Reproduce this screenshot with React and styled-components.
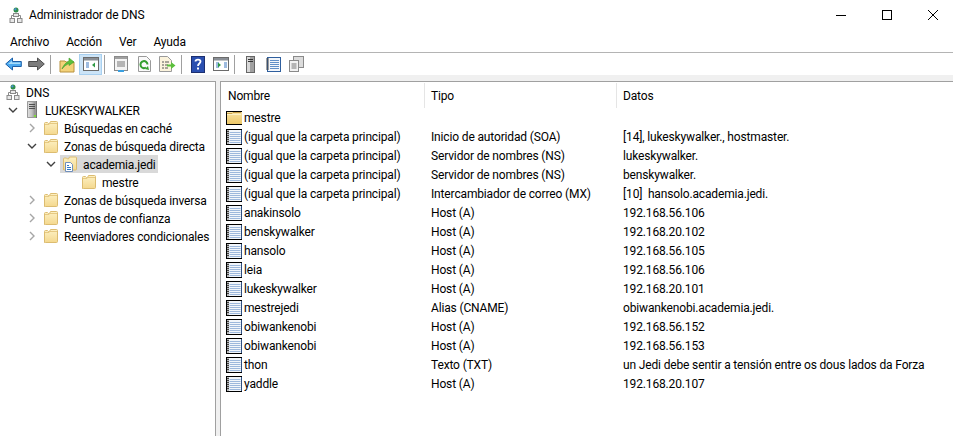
import React from "react";
import styled, { createGlobalStyle } from "styled-components";

const Global = createGlobalStyle`
  html, body { margin: 0; padding: 0; background: #fff; overflow: hidden; }
  body { font-family: Roboto, "Open Sans", sans-serif; font-size: 12px; letter-spacing: -0.15px; color: #000; }
`;

const Window = styled.div`
  width: 953px; height: 436px; display: flex; flex-direction: column; overflow: hidden;
`;
const TitleBar = styled.div`
  height: 30px; display: flex; align-items: center; padding-left: 8px; gap: 5px; flex: none;
`;
const TitleText = styled.span` font-size: 12px; flex: 1; `;
const WinButtons = styled.div` display: flex; margin-right: -3px; `;
const WinButton = styled.div`
  width: 46px; height: 30px; display: flex; align-items: center; justify-content: center;
`;
const MenuBar = styled.div`
  height: 22px; display: flex; align-items: center; padding: 1px 0 0 10px; gap: 17px; flex: none;
  border-bottom: 1px solid #b4b4b4; box-sizing: content-box;
  height: 21px;
`;
const MenuItem = styled.span` font-size: 12px; `;
const ToolBar = styled.div`
  height: 22px; display: flex; align-items: center; padding-left: 2px; background: #fff; flex: none;
`;
const ToolBtn = styled.div`
  width: 23px; height: 21px; display: flex; align-items: center; justify-content: center; flex: none;
  box-sizing: border-box;
  margin-left: ${p => p.$ml || 0}px;
  ${p => p.$on ? "background:#cce4f7;border:1px solid #a8d0f0;" : ""}
`;
const Sep = styled.div`
  width: 1px; height: 19px; background: #a0a0a0; flex: none;
  margin: 0 2px;
`;
const Band = styled.div` height: 6px; background: #f0f0f0; flex: none; `;
const Panes = styled.div`
  flex: 1; display: flex; background: #f0f0f0; min-height: 0;
`;
const TreePane = styled.div`
  width: 216px; flex: none; background: #fff; border: 1px solid #a0a0a0; border-left: 0; border-bottom: 0;
  padding-top: 1px; box-sizing: border-box;
`;
const TreeRow = styled.div`
  height: 18px; display: flex; align-items: center; white-space: nowrap;
  padding-left: ${p => 5 + 19 * Math.max(0, p.$level - 1)}px;
`;
const Chevron = styled.div`
  width: 19px; height: 18px; display: flex; align-items: center; flex: none; padding-left: 3px; box-sizing: border-box;
`;
const TreeLabel = styled.div`
  display: flex; align-items: center; gap: 5px; height: 18px;
  ${p => p.$sel ? "background:#d9d9d9;margin-left:-2px;padding:0 2px;" : ""}
`;
const TreeText = styled.span` padding-top: 2px; `;
const ListPane = styled.div`
  flex: 1; background: #fff; border: 1px solid #a0a0a0; border-right: 0; border-bottom: 0; margin-left: 4px;
  box-sizing: border-box; min-width: 0;
`;
const HeaderRow = styled.div`
  display: grid; grid-template-columns: 204px 192px 1fr; height: 26px; align-items: stretch;
`;
const HeaderCell = styled.div`
  padding: 1px 0 0 ${p => p.$first ? 7 : 6}px; display: flex; align-items: center; margin-top: 1px; box-sizing: border-box;
  ${p => p.$last ? "" : "border-right:1px solid #e5e5e5;"}
`;
const Row = styled.div`
  display: grid; grid-template-columns: 204px 192px 1fr; height: 19px; align-items: center; white-space: pre;
`;
const NameCell = styled.div` display: flex; align-items: center; gap: 2px; padding-left: 5px; `;
const Cell = styled.div` padding-left: 6px; `;

const Ico = styled.svg` display: block; flex: none; `;

const Gradients = () => (
  <Ico width="0" height="0" style={{ position: "absolute" }}>
    <defs>
      <linearGradient id="fld" x1="0" x2="0" y1="0" y2="1">
        <stop offset="0" stopColor="#fdf1c4" />
        <stop offset="1" stopColor="#f4d88e" />
      </linearGradient>
      <linearGradient id="fldE" x1="0" x2="0" y1="0" y2="1">
        <stop offset="0" stopColor="#fae6a8" />
        <stop offset="1" stopColor="#ecc563" />
      </linearGradient>
      <linearGradient id="srv" x1="0" x2="1" y1="0" y2="0">
        <stop offset="0" stopColor="#e4e4e4" />
        <stop offset=".5" stopColor="#c0c0c0" />
        <stop offset="1" stopColor="#6e6e6e" />
      </linearGradient>
    </defs>
  </Ico>
);

const FolderIcon = ({ edge }) =>
  edge ? (
    <Ico width="16" height="16" viewBox="0 0 16 16">
      <rect x="0" y="1" width="16" height="14" fill="url(#fldE)" />
      <path d="M0 1.500h16M0 14.500h16" stroke="#000" />
      <path d="M.5 1v14" stroke="#000" />
      <path d="M1 3.500h5l1-1h8" fill="none" stroke="#c9a24a" />
      <path d="M1 4.500h14" stroke="#fdf1c4" />
    </Ico>
  ) : (
    <Ico width="16" height="16" viewBox="0 0 16 16">
      <path d="M1.500 14.500v-11q0-1 1-1h2l1 1h1l1-2h6q1 0 1 1v11q0 1-1 1h-11q-1 0-1-1z" fill="url(#fld)" stroke="#dcbc70" />
      <path d="M2 4.500h4l1-1h7" fill="none" stroke="#e6c982" />
    </Ico>
  );

const ZoneIcon = () => (
  <Ico width="16" height="16" viewBox="0 0 16 16">
    <path d="M1.500 14v-11q0-1 1-1h2l1 1h1l1-2h6q1 0 1 1v11q0 1-1 1h-11q-1 0-1-1z" fill="url(#fld)" stroke="#dcbc70" />
    <path d="M3.500 6.500h5l2 2v7h-7z" fill="#fff" stroke="#6f8fbc" />
    <path d="M5 9.500h2M5 11.500h4M5 13.500h4" stroke="#2f78c8" />
  </Ico>
);

const RecordIcon = () => (
  <Ico width="16" height="16" viewBox="0 0 16 16">
    <rect x="0" y="0" width="16" height="16" fill="#f2f6fb" />
    <rect x="0" y="0" width="3" height="16" fill="#b8b8b8" />
    <path d="M0 2.500h3M0 4.500h3M0 6.500h3M0 8.500h3M0 10.500h3M0 12.500h3" stroke="#404040" />
    <path d="M3.500 3.500h11M3.500 5.500h11M3.500 7.500h11M3.500 9.500h11M3.500 11.500h11M3.500 13.500h11" stroke="#9db8dc" />
    <path d="M0 .5h16M0 15.500h16M.5 0v16" stroke="#000" />
    <path d="M15.500 1v14" stroke="#2e4f80" />
  </Ico>
);

const ServerIcon = () => (
  <Ico width="16" height="20" viewBox="0 0 16 20">
    <rect x="3" y="1" width="10" height="17" fill="url(#srv)" />
    <path d="M3.500 1.500h8v16h-8z" fill="none" stroke="#9a9a9a" />
    <path d="M5 4.500h6M5 6.500h6M5 8.500h6" stroke="#505050" />
    <rect x="10" y="15" width="2" height="2" fill="#7fdc3a" />
  </Ico>
);

const DnsIcon = () => (
  <Ico width="16" height="17" viewBox="0 0 16 17">
    <circle cx="8" cy="3" r="2.500" fill="#2f8f4a" />
    <circle cx="7.400" cy="2.300" r="1.100" fill="#4c8fe0" />
    <path d="M8 5.500v3M3.500 11V8.500h9V11" fill="none" stroke="#8a8a8a" />
    <rect x="5.500" y="6.500" width="5" height="3" fill="#e8e8e8" stroke="#8a8a8a" />
    <rect x="2" y="11.500" width="4.500" height="4" fill="#e8e8e8" stroke="#8a8a8a" />
    <rect x="9.500" y="11.500" width="4.500" height="4" fill="#e8e8e8" stroke="#8a8a8a" />
  </Ico>
);

const ChevronDown = () => (
  <Ico width="10" height="6" viewBox="0 0 10 6">
    <path d="M1 1l4 4 4-4" fill="none" stroke="#404040" strokeWidth="1.400" />
  </Ico>
);
const ChevronRight = () => (
  <Ico width="10" height="10" viewBox="0 0 10 10">
    <path d="M3 1l4 4-4 4" fill="none" stroke="#a6a6a6" strokeWidth="1.400" />
  </Ico>
);

const BackIcon = () => (
  <Ico width="17" height="14" viewBox="0 0 17 14">
    <path d="M.7 7L7.500 1v3.500h8.800v5H7.500V13z" fill="#4aa8ee" stroke="#1c5fa8" />
    <path d="M3 7l4-3.200v1.600h8.300v1.600z" fill="#a8dcfa" />
  </Ico>
);
const ForwardIcon = () => (
  <Ico width="17" height="14" viewBox="0 0 17 14">
    <path d="M16.300 7L9.500 1v3.500H.7v5h8.800V13z" fill="#7d7d7d" stroke="#4e4e4e" />
  </Ico>
);
const UpIcon = () => (
  <Ico width="16" height="18" viewBox="0 0 16 18">
    <path d="M1 6h5l1 1h8v10H1z" fill="#f3d27a" stroke="#b8923f" />
    <path d="M3 14C5 9 8 7 10 6V3l5 4-5 3.500V8.500C8 9.500 5 11 3 14z" fill="#5cc03c" stroke="#3c9a2a" strokeWidth=".6" />
  </Ico>
);
const PaneGlyph = ({ arrow }) => (
  <Ico width="16" height="14" viewBox="0 0 16 14">
    <rect x=".5" y=".5" width="15" height="13" fill="#fff" stroke="#6b6b6b" />
    <rect x="1" y="1" width="14" height="2.500" fill="#8a8f96" />
    <path d="M3 6h3M3 8h3M3 10h3" stroke="#3f78c0" />
    <path d={arrow === "left" ? "M12 5.500v5l-3-2.500z" : "M5 5.500v5l3-2.500z"} fill="#2f9a45" />
    {arrow !== "left" ? <path d="M11 6h3M11 8h3M11 10h3" stroke="#3f78c0" /> : null}
  </Ico>
);
const PropsIcon = () => (
  <Ico width="16" height="16" viewBox="0 0 16 16">
    <rect x="1.500" y=".5" width="13" height="14" fill="#f4f4f4" stroke="#8a8a8a" />
    <rect x="2" y="1" width="12" height="2" fill="#a0a0a0" />
    <path d="M4 6h8M4 8h8M4 10h8" stroke="#777" />
    <rect x="5" y="14" width="6" height="2" fill="#3aa0e0" />
  </Ico>
);
const RefreshIcon = () => (
  <Ico width="13" height="16" viewBox="0 0 13 16">
    <path d="M.5.5h8l4 4v11H.5z" fill="#fafafa" stroke="#9a9a9a" />
    <path d="M9.500 8.500A3.500 3.500 0 1 0 8 11.500" fill="none" stroke="#35a02f" strokeWidth="2" />
    <path d="M7 13l3-3 1 4z" fill="#35a02f" />
  </Ico>
);
const ExportIcon = () => (
  <Ico width="17" height="16" viewBox="0 0 17 16">
    <path d="M.5.5h8l4 4v11H.5z" fill="#fbf3dc" stroke="#9a9a9a" />
    <path d="M3 6h2M6 6h4M3 9h2M6 9h3M3 12h2M6 12h3" stroke="#555" />
    <path d="M8 8.500h4V6l4.500 3.500L12 13v-2.500H8z" fill="#5cc03c" />
  </Ico>
);
const HelpIcon = () => (
  <Ico width="14" height="17" viewBox="0 0 14 17">
    <rect x=".5" y=".5" width="13" height="16" fill="#2a4fb0" stroke="#1c2f70" />
    <path d="M4.500 5.500C4.500 3 9.500 3 9.500 5.500 9.500 7.500 7 7.500 7 10" fill="none" stroke="#fff" strokeWidth="1.800" />
    <rect x="6" y="11.500" width="2" height="2" fill="#fff" />
  </Ico>
);
const TowerIcon = () => (
  <Ico width="9" height="17" viewBox="0 0 9 17">
    <rect x=".5" y=".5" width="8" height="16" fill="#a0a0a0" stroke="#666" />
    <rect x="1" y="1" width="3" height="15" fill="#d8d8d8" />
    <path d="M2 3.500h5M2 5.500h5" stroke="#333" />
  </Ico>
);
const NotesIcon = () => (
  <Ico width="15" height="15" viewBox="0 0 15 15">
    <rect x="1.500" y=".5" width="13" height="14" fill="#f2f6fb" stroke="#2f5f9e" />
    <path d="M0 2h3M0 4h3M0 6h3M0 8h3M0 10h3M0 12h3" stroke="#444" />
    <path d="M4 3.500h9M4 5.500h9M4 7.500h9M4 9.500h9M4 11.500h9" stroke="#5f8fc8" />
  </Ico>
);
const CopyIcon = () => (
  <Ico width="15" height="16" viewBox="0 0 15 16">
    <rect x="4.500" y=".5" width="10" height="11" fill="#dcdcdc" stroke="#8a8a8a" />
    <rect x=".5" y="4.500" width="9" height="11" fill="#f2f2f2" stroke="#8a8a8a" />
    <path d="M2.500 8h5M2.500 10h5M2.500 12h5" stroke="#777" />
  </Ico>
);

const Tree = [
  { level: 0, icon: <DnsIcon />, text: "DNS" },
  { level: 1, chev: "down", icon: <ServerIcon />, text: "LUKESKYWALKER" },
  { level: 2, chev: "right", icon: <FolderIcon />, text: "Búsquedas en caché" },
  { level: 2, chev: "down", icon: <FolderIcon />, text: "Zonas de búsqueda directa" },
  { level: 3, chev: "down", icon: <ZoneIcon />, text: "academia.jedi", sel: true },
  { level: 4, chev: "none", icon: <FolderIcon />, text: "mestre" },
  { level: 2, chev: "right", icon: <FolderIcon />, text: "Zonas de búsqueda inversa" },
  { level: 2, chev: "right", icon: <FolderIcon />, text: "Puntos de confianza" },
  { level: 2, chev: "right", icon: <FolderIcon />, text: "Reenviadores condicionales" },
];

const same = "(igual que la carpeta principal)";
const Records = [
  ["mestre", "", "", true],
  [same, "Inicio de autoridad (SOA)", "[14], lukeskywalker., hostmaster."],
  [same, "Servidor de nombres (NS)", "lukeskywalker."],
  [same, "Servidor de nombres (NS)", "benskywalker."],
  [same, "Intercambiador de correo (MX)", "[10]  hansolo.academia.jedi."],
  ["anakinsolo", "Host (A)", "192.168.56.106"],
  ["benskywalker", "Host (A)", "192.168.20.102"],
  ["hansolo", "Host (A)", "192.168.56.105"],
  ["leia", "Host (A)", "192.168.56.106"],
  ["lukeskywalker", "Host (A)", "192.168.20.101"],
  ["mestrejedi", "Alias (CNAME)", "obiwankenobi.academia.jedi."],
  ["obiwankenobi", "Host (A)", "192.168.56.152"],
  ["obiwankenobi", "Host (A)", "192.168.56.153"],
  ["thon", "Texto (TXT)", "un Jedi debe sentir a tensión entre os dous lados da Forza"],
  ["yaddle", "Host (A)", "192.168.20.107"],
];

export default function App() {
  return (
    <Window>
      <Global />
      <Gradients />
      <TitleBar>
        <DnsIcon />
        <TitleText>Administrador de DNS</TitleText>
        <WinButtons>
          <WinButton>
            <Ico width="10" height="10" viewBox="0 0 10 10"><path d="M0 5.500h10" stroke="#000" /></Ico>
          </WinButton>
          <WinButton>
            <Ico width="10" height="10" viewBox="0 0 10 10"><rect x=".5" y=".5" width="9" height="9" fill="none" stroke="#000" /></Ico>
          </WinButton>
          <WinButton>
            <Ico width="10" height="10" viewBox="0 0 10 10"><path d="M0 0l10 10M10 0L0 10" stroke="#000" /></Ico>
          </WinButton>
        </WinButtons>
      </TitleBar>
      <MenuBar>
        <MenuItem>Archivo</MenuItem>
        <MenuItem>Acción</MenuItem>
        <MenuItem>Ver</MenuItem>
        <MenuItem>Ayuda</MenuItem>
      </MenuBar>
      <ToolBar>
        <ToolBtn><BackIcon /></ToolBtn>
        <ToolBtn><ForwardIcon /></ToolBtn>
        <Sep />
        <ToolBtn $ml={2}><UpIcon /></ToolBtn>
        <ToolBtn $ml={1} $on><PaneGlyph arrow="left" /></ToolBtn>
        <Sep />
        <ToolBtn $ml={2}><PropsIcon /></ToolBtn>
        <ToolBtn $ml={1}><RefreshIcon /></ToolBtn>
        <ToolBtn><ExportIcon /></ToolBtn>
        <Sep />
        <ToolBtn $ml={2}><HelpIcon /></ToolBtn>
        <ToolBtn><PaneGlyph arrow="right" /></ToolBtn>
        <Sep />
        <ToolBtn $ml={2}><TowerIcon /></ToolBtn>
        <ToolBtn><NotesIcon /></ToolBtn>
        <ToolBtn><CopyIcon /></ToolBtn>
      </ToolBar>
      <Band />
      <Panes>
        <TreePane>
          {Tree.map(t => (
            <TreeRow key={t.text} $level={t.level}>
              {t.level > 0 ? (
                <Chevron>
                  {t.chev === "down" ? <ChevronDown /> : t.chev === "right" ? <ChevronRight /> : null}
                </Chevron>
              ) : null}
              <TreeLabel $sel={t.sel}>
                {t.icon}
                <TreeText>{t.text}</TreeText>
              </TreeLabel>
            </TreeRow>
          ))}
        </TreePane>
        <ListPane>
          <HeaderRow>
            <HeaderCell $first>Nombre</HeaderCell>
            <HeaderCell>Tipo</HeaderCell>
            <HeaderCell $last>Datos</HeaderCell>
          </HeaderRow>
          {Records.map((r, i) => (
            <Row key={i}>
              <NameCell>
                {r[3] ? <FolderIcon edge /> : <RecordIcon />}
                <span>{r[0]}</span>
              </NameCell>
              <Cell>{r[1]}</Cell>
              <Cell>{r[2]}</Cell>
            </Row>
          ))}
        </ListPane>
      </Panes>
    </Window>
  );
}
